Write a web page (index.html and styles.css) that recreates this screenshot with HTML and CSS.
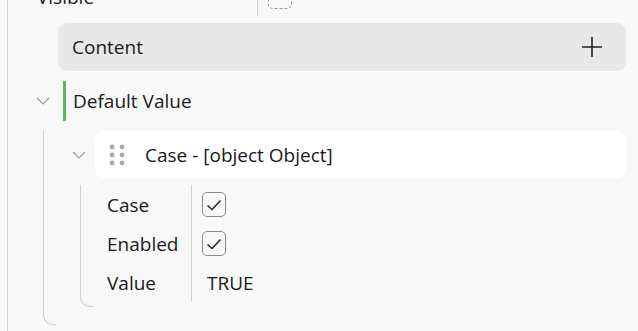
FILE: index.html
```html
<!DOCTYPE html>
<html lang="en">
<head>
  <meta charset="UTF-8">
  <title>Properties</title>
  <link rel="stylesheet" href="styles.css">
</head>
<body>
  <div class="tree">
    <div class="prop-row top-row">
      <div class="prop-label wide">Visible</div>
      <div class="prop-value"><span class="checkbox empty"></span></div>
    </div>

    <div class="content-bar">
      <span>Content</span>
      <svg class="plus" width="22" height="22" viewBox="0 0 22 22">
        <path d="M11 1v20M1 11h20" stroke="#222" stroke-width="1.6" fill="none"/>
      </svg>
    </div>

    <div class="group-head">
      <svg class="chevron" width="14" height="8" viewBox="0 0 14 8">
        <path d="M1 1l6 6 6-6" stroke="#9a9a9a" stroke-width="1.2" fill="none"/>
      </svg>
      <span class="marker"></span>
      <span class="group-title">Default Value</span>
    </div>

    <div class="group-body">
      <div class="item-head">
        <svg class="chevron" width="14" height="8" viewBox="0 0 14 8">
          <path d="M1 1l6 6 6-6" stroke="#9a9a9a" stroke-width="1.2" fill="none"/>
        </svg>
        <div class="card">
          <svg class="grip" width="16" height="22" viewBox="0 0 16 22">
            <circle cx="3" cy="3" r="2.4" fill="#a8a8a8"/>
            <circle cx="13" cy="3" r="2.4" fill="#a8a8a8"/>
            <circle cx="3" cy="11" r="2.4" fill="#a8a8a8"/>
            <circle cx="13" cy="11" r="2.4" fill="#a8a8a8"/>
            <circle cx="3" cy="19" r="2.4" fill="#a8a8a8"/>
            <circle cx="13" cy="19" r="2.4" fill="#a8a8a8"/>
          </svg>
          <span>Case - [object Object]</span>
        </div>
      </div>

      <div class="item-body">
        <div class="prop-row">
          <div class="prop-label">Case</div>
          <div class="prop-value"><span class="checkbox"><svg width="16" height="12" viewBox="0 0 16 12"><path d="M1.5 6.5l4.5 4 8.5-9" stroke="#222" stroke-width="1.5" fill="none"/></svg></span></div>
        </div>
        <div class="prop-row">
          <div class="prop-label">Enabled</div>
          <div class="prop-value"><span class="checkbox"><svg width="16" height="12" viewBox="0 0 16 12"><path d="M1.5 6.5l4.5 4 8.5-9" stroke="#222" stroke-width="1.5" fill="none"/></svg></span></div>
        </div>
        <div class="prop-row">
          <div class="prop-label">Value</div>
          <div class="prop-value"><span class="text-value">TRUE</span></div>
        </div>
      </div>
    </div>
  </div>
</body>
</html>
```

FILE: styles.css
```css
body {
  margin: 0;
  background: #f8f8f8;
  font-family: 'Open Sans', 'Noto Sans', sans-serif;
  font-size: 19px;
  color: #1a1a1a;
  overflow: hidden;
}
.tree {
  margin-left: 7px;
  border-left: 1px solid #d4d4d4;
  padding-right: 12px;
  height: 354px;
}
.prop-row {
  display: flex;
  height: 39px;
  align-items: stretch;
}
.top-row {
  margin-top: -23px;
  padding-left: 29px;
}
.prop-label {
  width: 84px;
  display: flex;
  align-items: center;
  border-right: 1px solid #cfcfcf;
}
.prop-label.wide {
  width: 220px;
}
.prop-value {
  display: flex;
  align-items: center;
  padding-left: 10px;
}
.checkbox {
  width: 22px;
  height: 23px;
  border: 1px solid #8a8a8a;
  border-radius: 5px;
  display: flex;
  align-items: center;
  justify-content: center;
}
.checkbox.empty {
  border: 1px dashed #9a9a9a;
}
.text-value {
  padding-left: 5px;
}
.content-bar {
  margin: 7px 0 0 50px;
  height: 48px;
  background: #e8e8e8;
  border-radius: 9px;
  display: flex;
  align-items: center;
  justify-content: space-between;
  padding: 0 23px 0 14px;
}
.plus {
  display: block;
}
.group-head {
  display: flex;
  align-items: center;
  height: 40px;
  margin-top: 10px;
  padding-left: 28px;
}
.chevron {
  display: block;
  flex: none;
}
.marker {
  width: 3px;
  align-self: stretch;
  background: #5fb564;
  margin-left: 13px;
  margin-right: 7px;
}
.group-body {
  position: relative;
  margin-left: 35px;
  padding-top: 10px;
  height: 194px;
}
.group-body::before,
.item-body::before {
  content: "";
  position: absolute;
  left: 0;
  top: 0;
  bottom: 0;
  width: 12px;
  border-left: 1px solid #cfcfcf;
  border-bottom: 1px solid #cfcfcf;
  border-bottom-left-radius: 10px;
}
.group-body::before {
  top: 10px;
}
.item-head {
  display: flex;
  align-items: center;
  padding-left: 29px;
}
.card {
  flex: 1;
  margin-left: 9px;
  height: 47px;
  background: #fff;
  border-radius: 9px;
  display: flex;
  align-items: center;
  padding-left: 14px;
}
.grip {
  display: block;
  margin-right: 20px;
}
.item-body {
  position: relative;
  margin: 7px 0 0 37px;
  padding-left: 27px;
  padding-bottom: 5px;
}
```
